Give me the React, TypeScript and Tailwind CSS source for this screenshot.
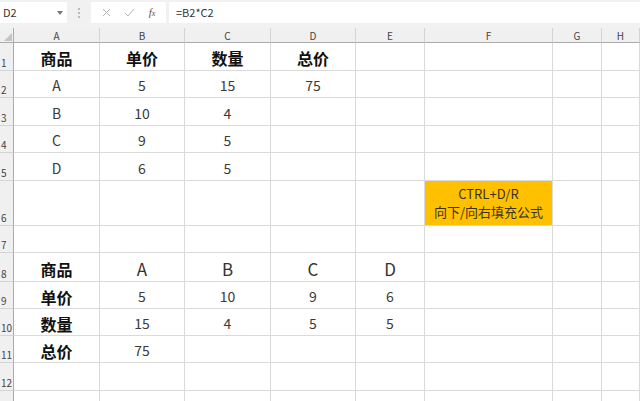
import React from "react"

type Kind = "head" | "num" | "big" | "note"
type Cell = { t?: string; k?: Kind } | null

const cols = ["A", "B", "C", "D", "E", "F", "G", "H"]

const h = (t: string): Cell => ({ t, k: "head" })
const n = (t: string): Cell => ({ t, k: "num" })
const b = (t: string): Cell => ({ t, k: "big" })

// 每行 8 列：A-H
const rows: Cell[][] = [
  [h("商品"), h("单价"), h("数量"), h("总价"), null, null, null, null],
  [n("A"), n("5"), n("15"), n("75"), null, null, null, null],
  [n("B"), n("10"), n("4"), null, null, null, null, null],
  [n("C"), n("9"), n("5"), null, null, null, null, null],
  [n("D"), n("6"), n("5"), null, null, null, null, null],
  [null, null, null, null, null, { k: "note" }, null, null],
  [null, null, null, null, null, null, null, null],
  [h("商品"), b("A"), b("B"), b("C"), b("D"), null, null, null],
  [h("单价"), n("5"), n("10"), n("9"), n("6"), null, null, null],
  [h("数量"), n("15"), n("4"), n("5"), n("5"), null, null, null],
  [h("总价"), n("75"), null, null, null, null, null, null],
  [null, null, null, null, null, null, null, null],
  [null, null, null, null, null, null, null, null],
]

function CellView({ c }: { c: Cell }) {
  if (!c) return <div className="border-r border-b border-[#dadada]" />
  if (c.k === "note") {
    return (
      <div className="flex flex-col items-center justify-center border-r border-b border-[#dadada] bg-[#ffc000] text-[13px] leading-[18px] text-[#3b3320]">
        <span>CTRL+D/R</span>
        <span>向下/向右填充公式</span>
      </div>
    )
  }
  const cls =
    c.k === "head"
      ? "text-[16px] font-bold text-[#111]"
      : c.k === "big"
        ? "text-[17px] text-[#333]"
        : "text-[14px] text-[#3a3a3a]"
  return (
    <div className={`flex items-center justify-center pt-[3px] border-r border-b border-[#dadada] ${cls}`}>
      {c.t}
    </div>
  )
}

export default function App() {
  return (
    <div className="w-[640px] h-[401px] overflow-hidden bg-white font-['Noto_Sans_CJK_SC','Liberation_Sans',sans-serif]">
      {/* 编辑栏 */}
      <div className="flex h-[28px] gap-[3px] bg-[#f1f1f1] pt-[2px] pb-[5px]">
        <div className="flex w-[67px] items-center justify-between bg-white pl-[3px] pr-[4px] text-[11px] text-[#333]">
          <span>D2</span>
          <svg width="6" height="4" viewBox="0 0 6 4"><path d="M0 0h6L3 4z" fill="#777" /></svg>
        </div>
        <div className="flex w-[18px] flex-col items-center justify-center gap-[2px]">
          <span className="size-[2px] bg-[#bbb]" />
          <span className="size-[2px] bg-[#bbb]" />
          <span className="size-[2px] bg-[#bbb]" />
        </div>
        <div className="flex w-[75px] items-center justify-around bg-white px-[4px]">
          <svg width="9" height="9" viewBox="0 0 9 9"><path d="M1 1l7 7M8 1l-7 7" stroke="#b5b5b5" strokeWidth="1" /></svg>
          <svg width="11" height="9" viewBox="0 0 11 9"><path d="M1 5l3 3 6-7" stroke="#b5b5b5" strokeWidth="1" fill="none" /></svg>
          <span className="font-['Liberation_Serif',serif] text-[11px] italic text-[#555]">f<span className="text-[8px]">x</span></span>
        </div>
        <div className="flex flex-1 items-center bg-white pl-[7px] text-[11px] text-[#333]">=B2*C2</div>
      </div>

      {/* 表格 */}
      <div className="grid grid-cols-[14px_86px_85px_86px_85px_69px_128px_49px_38px] grid-rows-[15px_28px_27px_28px_27px_28px_45px_27px_29px_27px_27px_27px_28px_28px]">
        <div className="relative border-r border-b border-[#ababab] bg-[#f0f0f0]">
          <svg className="absolute right-[1px] bottom-[1px]" width="8" height="8" viewBox="0 0 8 8"><path d="M8 0v8H0z" fill="#c4c4c4" /></svg>
        </div>
        {cols.map((c) => (
          <div key={c} className="flex items-center justify-center border-r border-b border-r-[#d4d4d4] border-b-[#ababab] bg-[#f0f0f0] text-[10px] text-[#444]">
            {c}
          </div>
        ))}
        {rows.map((r, i) => (
          <React.Fragment key={i}>
            <div className="flex items-end border-r border-b border-r-[#ababab] border-b-[#d4d4d4] bg-[#f0f0f0] pl-[1px] pb-[1px] text-[10px] leading-[12px] text-[#444]">
              {i < 12 ? i + 1 : ""}
            </div>
            {r.map((c, j) => (
              <CellView key={j} c={c} />
            ))}
          </React.Fragment>
        ))}
      </div>
    </div>
  )
}
